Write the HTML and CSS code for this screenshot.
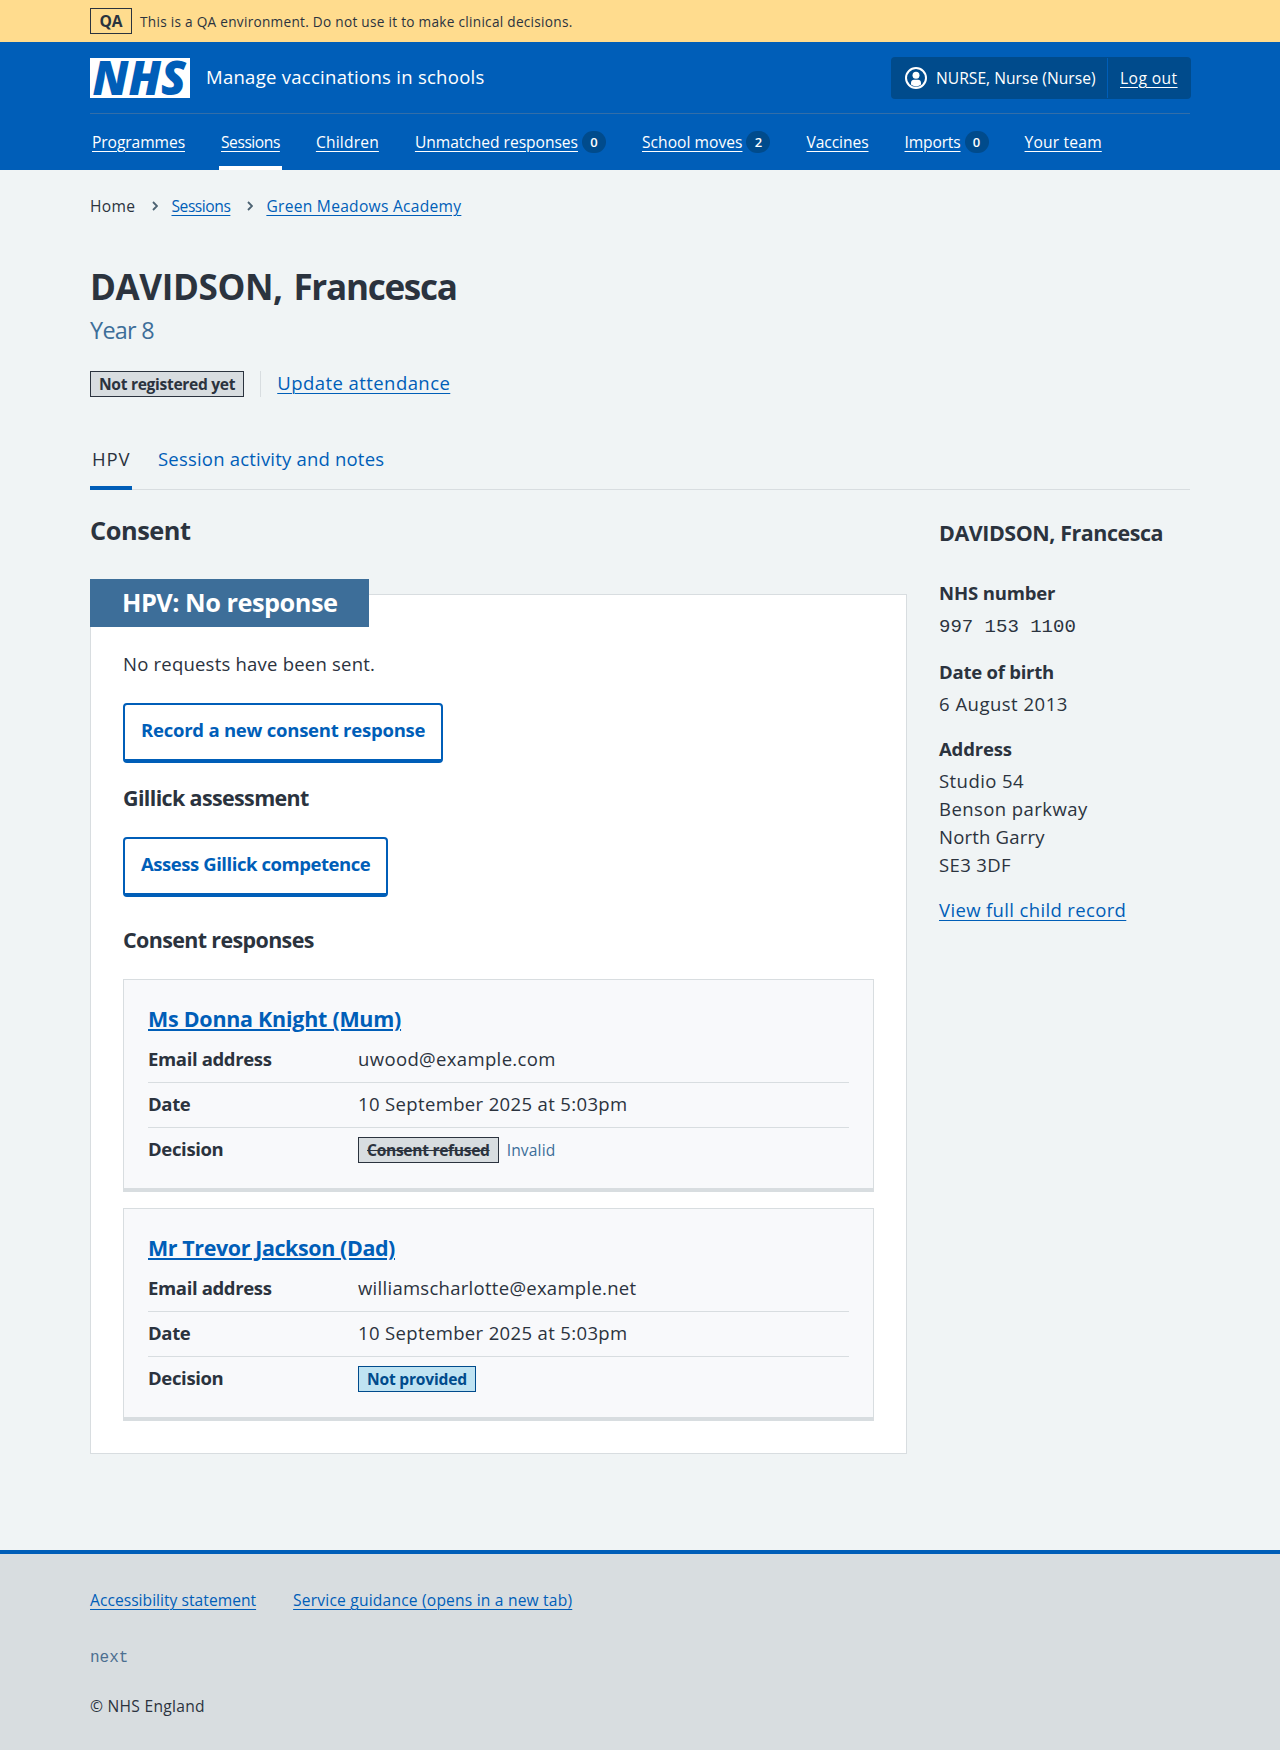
FILE: index.html
```
<!DOCTYPE html>
<html lang="en">
<head>
<meta charset="utf-8">
<title>DAVIDSON, Francesca – Manage vaccinations in schools</title>
<link rel="stylesheet" href="styles.css">
</head>
<body>
<div class="env">
  <div class="container env-row">
    <strong class="env-tag">QA</strong>
    <span class="env-text">This is a QA environment. Do not use it to make clinical decisions.</span>
  </div>
</div>

<header class="header">
  <div class="container">
    <div class="header-top">
      <svg class="logo" viewBox="0 0 100 40" width="100" height="40" role="img" aria-label="NHS">
        <rect width="100" height="40" fill="#fff"/>
        <text class="logo-text" x="2.6" y="37" textLength="93.5" lengthAdjust="spacingAndGlyphs">NHS</text>
      </svg>
      <span class="service">Manage vaccinations in schools</span>
      <div class="account">
        <div class="account-user">
          <svg width="22" height="22" viewBox="0 0 22 22" aria-hidden="true">
            <circle cx="11" cy="11" r="10" fill="none" stroke="#fff" stroke-width="2"/>
            <circle cx="11" cy="8.2" r="3.5" fill="#fff"/>
            <path d="M6 17.600v-1.600c0-2 1.300-3.200 3-3.200h4c1.700 0 3 1.200 3 3.200v1.600c-1.300 1.200-3 1.800-5 1.800s-3.700-.6-5-1.800z" fill="#fff"/>
          </svg>
          <span class="t03">NURSE, Nurse (Nurse)</span>
        </div>
        <a class="account-out t42" href="#">Log out</a>
      </div>
    </div>
    <nav class="nav">
      <div class="nav-item"><a class="tn07" href="#">Programmes</a></div>
      <div class="nav-item current"><a class="tn44" href="#">Sessions</a></div>
      <div class="nav-item"><a class="t19" href="#">Children</a></div>
      <div class="nav-item"><a class="tn03" href="#">Unmatched responses</a><span class="count">0</span></div>
      <div class="nav-item"><a class="t03" href="#">School moves</a><span class="count">2</span></div>
      <div class="nav-item"><a class="tn07" href="#">Vaccines</a></div>
      <div class="nav-item"><a class="tn15" href="#">Imports</a><span class="count">0</span></div>
      <div class="nav-item"><a class="t19" href="#">Your team</a></div>
    </nav>
  </div>
</header>

<main class="container main">
  <nav class="crumbs">
    <span class="t37">Home</span>
    <svg class="chevron" width="6" height="10" viewBox="0 0 6 10"><path d="M1 1l4 4-4 4" fill="none" stroke="#4c6272" stroke-width="1.800"/></svg>
    <a class="tn44" href="#">Sessions</a>
    <svg class="chevron" width="6" height="10" viewBox="0 0 6 10"><path d="M1 1l4 4-4 4" fill="none" stroke="#4c6272" stroke-width="1.800"/></svg>
    <a class="t27" href="#">Green Meadows Academy</a>
  </nav>

  <h1 class="title">DAVIDSON, <span class="given">Francesca</span></h1>
  <p class="caption">Year 8</p>
  <div class="status">
    <strong class="tag tag-grey">Not registered yet</strong>
    <div class="status-action"><a class="t42" href="#">Update attendance</a></div>
  </div>

  <ul class="tabs">
    <li class="tab tab-on t80">HPV</li>
    <li class="tab"><a class="t19" href="#">Session activity and notes</a></li>
  </ul>

  <div class="columns">
    <section>
      <h2 class="heading">Consent</h2>
      <div class="feature">
        <h3 class="feature-title">HPV: No response</h3>
        <p class="feature-text">No requests have been sent.</p>
        <a class="button tn25" href="#">Record a new consent response</a>
        <h4 class="sub sub-gillick">Gillick assessment</h4>
        <a class="button tn44" href="#">Assess Gillick competence</a>
        <h4 class="sub sub-responses">Consent responses</h4>

        <article class="card">
          <h5 class="card-title tn25"><a href="#">Ms Donna Knight (Mum)</a></h5>
          <dl class="summary">
            <div class="row"><dt>Email address</dt><dd class="t37">uwood@example.com</dd></div>
            <div class="row"><dt>Date</dt><dd class="t37">10 September 2025 at 5:03pm</dd></div>
            <div class="row row-tag"><dt class="tn44">Decision</dt><dd><strong class="tag tag-grey"><s>Consent refused</s></strong><span class="note">Invalid</span></dd></div>
          </dl>
        </article>

        <article class="card">
          <h5 class="card-title tn37"><a href="#">Mr Trevor Jackson (Dad)</a></h5>
          <dl class="summary">
            <div class="row"><dt>Email address</dt><dd class="t27">williamscharlotte@example.net</dd></div>
            <div class="row"><dt>Date</dt><dd class="t37">10 September 2025 at 5:03pm</dd></div>
            <div class="row row-tag"><dt class="tn44">Decision</dt><dd><strong class="tag tag-blue">Not provided</strong></dd></div>
          </dl>
        </article>
      </div>
    </section>

    <aside class="side">
      <h3 class="side-title">DAVIDSON, Francesca</h3>
      <dl class="facts">
        <dt class="tn15">NHS number</dt>
        <dd class="mono">997 153 1100</dd>
        <dt class="tn25">Date of birth</dt>
        <dd class="t49">6 August 2013</dd>
        <dt class="tn15">Address</dt>
        <dd><span class="t42">Studio 54</span><br><span class="t42">Benson parkway</span><br><span class="t19">North Garry</span><br><span class="t37">SE3 3DF</span></dd>
      </dl>
      <a class="t37" href="#">View full child record</a>
    </aside>
  </div>
</main>

<footer class="footer">
  <div class="container">
    <div class="footer-links">
      <a class="t03" href="#">Accessibility statement</a>
      <a class="t19" href="#">Service guidance (opens in a new tab)</a>
    </div>
    <p class="version">next</p>
    <p class="copyright">© NHS England</p>
  </div>
</footer>
</body>
</html>
```
FILE: styles.css
```
* { box-sizing: border-box; }
body {
  margin: 0;
  background: #f0f4f5;
  color: #2b333e;
  font: 450 18.525px/28px "Open Sans", "Noto Sans", sans-serif;
}
h1, h2, h3, h4, h5, p, ul, dl, dd { margin: 0; padding: 0; font-weight: 700; }
p, ul, dl, dd { font-weight: 450; }
a { color: #005eb8; text-underline-offset: 2.500px; text-decoration-thickness: 1px; }
.container { width: 1100px; margin: 0 auto; }

/* Tracking steps */
.tn44 { letter-spacing: -.45px; }
.tn37 { letter-spacing: -.39px; }
.tn25 { letter-spacing: -.24px; }
.tn15 { letter-spacing: -.15px; }
.tn07 { letter-spacing: -.07px; }
.tn03 { letter-spacing: -.03px; }
.t03 { letter-spacing: .03px; }
.t19 { letter-spacing: .19px; }
.t27 { letter-spacing: .27px; }
.t37 { letter-spacing: .35px; }
.t42 { letter-spacing: .43px; }
.t49 { letter-spacing: .49px; }
.t80 { letter-spacing: .8px; }

/* Environment banner */
.env { background: #ffdc8e; }
.env-row { display: flex; align-items: center; gap: 8px; height: 42px; }
.env-tag {
  width: 42px; height: 26px;
  border: 1px solid #2b333e;
  font-size: 15.6px; line-height: 24px; font-weight: 700;
  letter-spacing: -.2px; text-align: center;
}
.env-text { font-size: 13.65px; letter-spacing: .27px; line-height: 20px; padding-top: 2px; }

/* Header */
.header { height: 128px; background: #005eb8; color: #fff; font-size: 15.6px; }
.header a { color: #fff; }
.header-top { display: flex; align-items: center; height: 72px; border-bottom: 1px solid #336ea8; }
.logo { display: block; overflow: visible; }
.logo-text { font: italic 800 47.500px "Open Sans", sans-serif; fill: #005eb8; }
.service { margin-left: 16px; padding-bottom: 2px; font-size: 18.525px; letter-spacing: .27px; }
.account { display: flex; height: 42px; margin: 0 -1px 0 auto; background: #004b8c; border-radius: 4px; line-height: 40px; padding: 1px 0; }
.account-user { display: flex; align-items: center; gap: 9px; width: 217px; padding-left: 14px; border-right: 1px solid #005eb8; white-space: nowrap; }
.account-out { width: 83px; padding-left: 12px; white-space: nowrap; }
.nav { display: flex; gap: 32px; height: 56px; }
.nav-item { display: flex; align-items: center; gap: 4px; padding: 0 2px 1px; white-space: nowrap; }
.current { box-shadow: inset 0 -4px #fff; }
.count { width: 24px; height: 22px; border-radius: 12px; background: #004b8c; font-size: 13px; line-height: 22px; text-align: center; font-weight: 600; }

/* Page heading */
.crumbs { display: flex; align-items: center; padding-top: 24px; font-size: 15.6px; line-height: 24px; }
.chevron { margin: 0 13px 0 17px; }
.title { margin-top: 46px; font-size: 35.1px; line-height: 44px; letter-spacing: -.4px; word-spacing: 2px; }
.given { letter-spacing: -1.300px; }
.caption { margin-top: 6px; color: #3d6e99; font-size: 23.4px; line-height: 32px; letter-spacing: -.7px; }
.status { display: flex; gap: 16px; margin-top: 25px; height: 26px; }
.status-action { border-left: 1px solid #d8dde0; padding-left: 16px; line-height: 24px; }
.tag {
  display: inline-block; height: 26px; padding: 0 8px;
  border: 1px solid; font-size: 15.6px; line-height: 25px; font-weight: 700;
  letter-spacing: -.31px; white-space: nowrap;
}
.tag-grey { color: #2b333e; background: #d8dde0; }
.tag-blue { color: #004b8c; background: #bfe3f2; letter-spacing: -.21px; }

/* Tabs */
.tabs { display: flex; gap: 24px; margin-top: 48px; border-bottom: 1px solid #d8dde0; list-style: none; }
.tab { height: 45px; margin-bottom: -1px; padding: 0 2px; }
.tab a { text-decoration: none; }
.tab-on { width: 42px; border-bottom: 4px solid #005eb8; }

.columns { display: grid; grid-template-columns: 817px 251px; gap: 32px; }
.heading { margin-top: 24px; font-size: 25.35px; line-height: 32px; letter-spacing: -.45px; }

/* Feature card */
.feature { margin-top: 48px; padding: 0 32px 32px; height: 860px; background: #fff; border: 1px solid #d8dde0; }
.feature-title {
  width: 279px; height: 48px; margin: -16px 0 0 -33px; padding-left: 32px;
  background: #3d6e99; color: #fff;
  font-size: 25.35px; line-height: 47px; letter-spacing: -.5px; white-space: nowrap;
}
.feature-text { margin: 23px 0 25px; letter-spacing: .21px; }
.button {
  display: block; width: fit-content; height: 60px; padding: 11px 16px 0;
  border: 2px solid #005eb8; border-bottom-width: 4px; border-radius: 4px;
  font-weight: 700; text-decoration: none;
}
.sub { font-size: 21.45px; line-height: 30px; letter-spacing: -.62px; }
.sub-gillick { margin: 20px 0 24px; }
.sub-responses { margin: 28px 0 24px; }

/* Response cards */
.card { height: 213px; padding: 24px 24px 0; background: #f8f9fb; border: 1px solid #d8dde0; border-bottom-width: 4px; }
.card + .card { margin-top: 16px; }
.card-title { font-size: 21.45px; line-height: 30px; }
.card-title a { text-decoration-thickness: 2px; text-underline-offset: 2px; }
.summary { margin-top: 4px; }
.row { display: grid; grid-template-columns: 210px 1fr; height: 45px; padding-top: 7px; border-bottom: 1px solid #d8dde0; }
.row dt { font-weight: 700; letter-spacing: -.36px; }
.row-tag { border: 0; }
.row-tag dd { display: flex; gap: 8px; padding-top: 2px; }
.note { color: #3d6e99; font-size: 15.6px; line-height: 26px; letter-spacing: .15px; }

/* Child summary */
.side-title { margin-top: 28px; font-size: 21.45px; line-height: 30px; letter-spacing: -.44px; white-space: nowrap; }
.facts { margin-top: 31px; }
.facts dt { font-weight: 700; }
.facts dd { padding: 4px 0 17px; }
.facts .mono { padding-top: 6px; font: 19px/28px "Liberation Mono", monospace; }

/* Footer */
.footer { height: 200px; margin-top: 96px; padding-top: 34px; background: #d8dde0; border-top: 4px solid #005eb8; font-size: 15.6px; line-height: 24px; }
.footer-links { display: flex; gap: 37px; }
.version { margin: 34px 0 24px; color: #4c6f90; font: 16px/24px "Liberation Mono", monospace; }
.copyright { letter-spacing: .27px; }
```
